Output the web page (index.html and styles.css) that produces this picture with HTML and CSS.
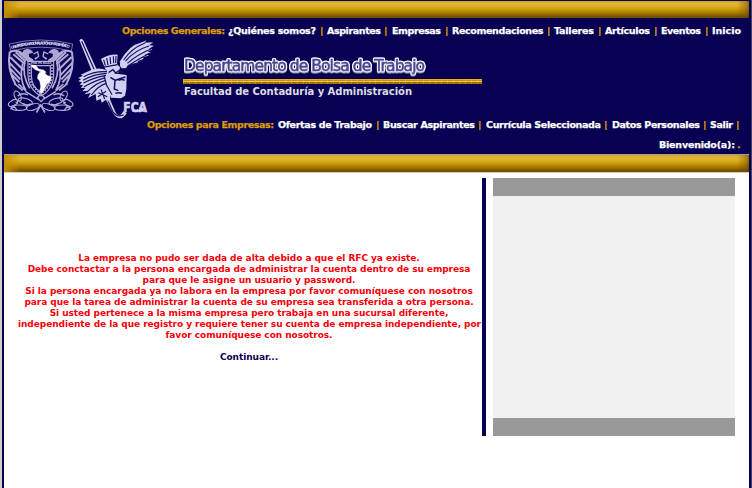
FILE: index.html
```
<!DOCTYPE html>
<html lang="es">
<head>
<meta charset="utf-8">
<title>Departamento de Bolsa de Trabajo</title>
<link rel="stylesheet" href="styles.css">
</head>
<body>
<div class="page">
  <div class="bar"></div>
  <header class="header">
    <nav class="nav nav-general"><svg width="619" height="14">
      <text class="gold" x="0" y="10" textLength="103">Opciones Generales:</text>
      <text x="106" y="10" textLength="88">¿Quiénes somos?</text><text class="gold" x="198" y="10">|</text>
      <text x="205" y="10" textLength="54">Aspirantes</text><text class="gold" x="262" y="10">|</text>
      <text x="270" y="10" textLength="49">Empresas</text><text class="gold" x="323" y="10">|</text>
      <text x="330" y="10" textLength="91.5">Recomendaciones</text><text class="gold" x="425" y="10">|</text>
      <text x="432" y="10" textLength="40">Talleres</text><text class="gold" x="476" y="10">|</text>
      <text x="483" y="10" textLength="45">Artículos</text><text class="gold" x="532" y="10">|</text>
      <text x="539" y="10" textLength="40">Eventos</text><text class="gold" x="583" y="10">|</text>
      <text x="590" y="10" textLength="29">Inicio</text>
    </svg></nav>
    <div class="brand">
      <svg class="logos" viewBox="12 114 456 240" width="152" height="80">
        <defs>
          <path id="arc" d="M34 147Q120 120 216 146"/>
        </defs>
        <g class="line">
          <path d="M28 132Q122 108 218 132L214 153Q122 130 32 153Z" stroke-width="2"/>
          <g id="eagle">
            <path class="solid" d="M72 152Q88 143 97 157L84 160 86 172 99 180 91 188 76 177 69 163Z"/>
            <path d="M70 162Q47 146 29 157Q20 205 47 254M40 163l35 29M31 172l40 39M28 188l37 39M30 205l31 33M34 222l24 25M47 157l29 27M57 157l18 16" stroke-width="6"/>
            <path d="M75 182Q65 225 89 265M68 190Q56 237 78 272M55 252l22 20M43 251l25 20" stroke-width="5"/>
            <path d="M100 162l13-6 3 13-10 9M104 176l11-5" stroke-width="4"/>
          </g>
          <use href="#eagle" transform="matrix(-1 0 0 1 245 0)"/>
          <path class="shell" d="M84 184H161V222Q160 268 123 288Q84 268 84 222Z"/>
          <path class="shell" d="M94 197H151V226Q151 263 123 276Q94 262 94 226Z"/>
          <path d="M89 190v34q0 35 34 57 33-23 33-57v-34" stroke-width="5" stroke-dasharray="5 4"/>
          <path class="land" d="M92 194l15 2 9 11 15 3 8 7-9 2-12-5-12-5-9-7Z"/>
          <path class="land" d="M119 217l13-1 8 9 13 6-2 13-10 9-8 14-7 13-8-1 4-20-3-16-7-8 2-11Z"/>
          <path d="M112 294l10-14 12 14-11 11ZM76 274l40 25M168 274l-40 25M84 285q-18-9-31 3M160 285q17-9 33 3" stroke-width="4"/>
          <g id="cactus">
            <ellipse cx="53" cy="288" rx="9" ry="16" transform="rotate(-28 53 288)"/>
            <ellipse cx="76" cy="304" rx="22" ry="9" transform="rotate(16 76 304)"/>
            <ellipse cx="39" cy="309" rx="15" ry="8" transform="rotate(-30 39 309)"/>
            <ellipse cx="57" cy="323" rx="23" ry="8"/>
            <ellipse cx="99" cy="321" rx="20" ry="9" transform="rotate(-18 99 321)"/>
            <path d="M31 327l12-7 8 11M69 311l11 5 12-4M109 337l13-22 12 22M47 306l7 5" stroke-width="4"/>
          </g>
          <use href="#cactus" transform="matrix(-1 0 0 1 244 0)"/>
        </g>
        <text class="motto"><textPath href="#arc" textLength="176">UNIVERSIDAD NACIONAL AUTÓNOMA DE MÉXICO</textPath></text>
        <text class="shield" x="92" y="193" textLength="62">POR MI RAZA</text>
        <g class="mascot">
          <path class="light" d="M238 121q6-8 12 0l60 131 35 81q8 20 20 8l6-8 9 7q-14 23-31 11-8-6-13-17L286 239Z"/>
          <path class="cut" d="M245 124L338 334Q350 354 371 344"/>
          <path class="light" d="M303 177q25-15 50-13l-2 28 9 10-3 15-24 7-17-17Z"/>
          <path class="cut" d="M311 179l5 18M320 174l4 21M330 171l2 21M340 169l1 21M348 168l-1 21M307 202l46-8"/>
          <path class="light" d="M359 185Q389 134 420 129l20-8-7 7 27-1-13 9 15 1-15 9 11 1-15 8 11 2-20 7 14 2-22 7 7 4-20 6 3 5-20 3-7 5-20 3-7-2Q373 207 363 198Z"/>
          <path class="cut" d="M371 180Q394 145 435 129M376 184Q405 150 447 138M382 190Q413 163 453 147M384 197Q416 177 450 159M384 202Q414 190 438 174"/>
          <circle class="light" cx="371" cy="194" r="11"/>
          <path class="light" d="M326 218l54 7-1 42-4 20-12 8-30-2-17-45Z"/>
          <path class="cut face" d="M326 217l13-8 8 10 11-8 11 9M331 232l15 9 30-10M345 241l-2 26 12 5M356 241q9-5 18 0M346 280q11-4 20 0"/>
          <path class="light" d="M326 214Q299 199 272 211L242 224 249 227 234 234 243 237 235 244 246 247 239 254 249 255 243 264 256 264 247 274 263 272 254 283 272 279 264 294 288 281 320 260Z"/>
          <path class="cut" d="M321 215Q282 213 251 230M320 220Q281 222 249 241M318 226Q281 233 250 249M316 233Q285 242 251 261M318 241Q288 248 260 277M319 250Q296 256 274 285"/>
          <path class="light" d="M301 266l-14 15 2 21 13-5 3 11 13-9 11 7 2-29-10-18Z"/>
          <path class="cut" d="M295 278l27 12M294 290l24-16M303 268l11 29M312 228l8 28 16 28"/>
          <text class="fca" transform="translate(370 335) scale(.79 1)">FCA</text>
          <path class="light" d="M417 320l20 15H398l-3-5h24Z"/>
        </g>
      </svg>
      <div class="titles">
        <svg class="title" width="248" height="24">
          <text x="1" y="16" textLength="241">Departamento de Bolsa de Trabajo</text>
        </svg>
        <div class="rule"></div>
        <svg class="faculty" width="240" height="16"><text x="1" y="11" textLength="228">Facultad de Contaduría y Administración</text></svg>
      </div>
    </div>
    <nav class="nav nav-company"><svg width="594" height="14">
      <text class="gold" x="0" y="10" textLength="127">Opciones para Empresas:</text>
      <text x="131" y="10" textLength="94">Ofertas de Trabajo</text><text class="gold" x="229" y="10">|</text>
      <text x="236" y="10" textLength="92">Buscar Aspirantes</text><text class="gold" x="331" y="10">|</text>
      <text x="339" y="10" textLength="115">Currícula Seleccionada</text><text class="gold" x="457" y="10">|</text>
      <text x="465" y="10" textLength="88">Datos Personales</text><text class="gold" x="556" y="10">|</text>
      <text x="563" y="10" textLength="23">Salir</text><text class="gold" x="589" y="10">|</text>
    </svg></nav>
    <div class="nav welcome"><svg width="82" height="14">
      <text x="0" y="10" textLength="76">Bienvenido(a):</text><text class="gold" x="78" y="10">.</text>
    </svg></div>
  </header>
  <div class="bar bar-lower"></div>
  <main class="content">
    <section class="message">
      <p>La empresa no pudo ser dada de alta debido a que el RFC ya existe.<br>
      Debe conctactar a la persona encargada de administrar la cuenta dentro de su empresa<br>
      para que le asigne un usuario y password.<br>
      Si la persona encargada ya no labora en la empresa por favor comuníquese con nosotros<br>
      para que la tarea de administrar la cuenta de su empresa sea transferida a otra persona.<br>
      Si usted pertenece a la misma empresa pero trabaja en una sucursal diferente,<br>
      independiente de la que registro y requiere tener su cuenta de empresa independiente, por<br>
      favor comuníquese con nosotros.</p>
      <a class="continue">Continuar...</a>
    </section>
    <div class="divider"></div>
    <aside class="panel"></aside>
  </main>
</div>
</body>
</html>
```
FILE: styles.css
```
* { box-sizing: border-box; }
body {
  margin: 0;
  background: #d0d0d0;
  font: bold 9px/11px Verdana, "DejaVu Sans", sans-serif;
  overflow: hidden;
}
svg { display: block; overflow: visible; }
.page {
  width: 749px;
  height: 488px;
  margin-left: 2px;
  border: solid #080052;
  border-width: 1px 2px 0;
  background: #fff;
  box-shadow: 1px 0 #494466;
}
.bar {
  height: 17px;
  background:
    radial-gradient(ellipse at 7px 4px, #f2dfa0b0 0, #e4bd4a60 9px, transparent 18px),
    linear-gradient(90deg, #c58f00 0, #c58f0000 16px, transparent 733px, #66450070 743px, #403000a0),
    linear-gradient(#c8a02b 0, #e1b532 2px, #deb12c 5px, #d19f08 8px, #a87900 12px, #805900 15px, #694900);
}
.bar-lower {
  height: 19px;
  border-top: 1px solid #aaa08e;
  border-bottom: 1px solid #d8cfb9;
}
.header {
  display: flex;
  flex-direction: column;
  align-items: flex-end;
  height: 136px;
  background: #080052;
}
.nav {
  fill: #fff;
  padding-right: 8px;
}
.nav text { font-size: 9.5px; stroke: #fff; stroke-width: .25px; }
.nav .gold { fill: #dc9b06; stroke: #dc9b06; }
.nav-general { height: 20px; padding-top: 6px; }
.nav-company { height: 20px; padding-top: 0; }
.welcome { padding-top: 0; }
.brand {
  display: flex;
  width: 100%;
  height: 80px;
}
.titles { padding: 17px 0 0 27px; }
.title text {
  font: normal 15.5px "DejaVu Sans", sans-serif;
  fill: #4a4590;
  stroke: #4a4590;
  stroke-width: .5px;
  filter:
    drop-shadow(1px 0 0 #f4f4fa) drop-shadow(-1px 0 0 #f4f4fa)
    drop-shadow(0 1px 0 #dcdce2) drop-shadow(0 -1px 0 #fff)
    drop-shadow(0 1px 0 #88869a);
}
.rule {
  width: 299px;
  height: 5px;
  background:
    repeating-linear-gradient(90deg, #eac45860 0 1px, transparent 1px 6px),
    linear-gradient(#e6af17 0 1px, #c98f00 1px 2px, #e8c45d 2px 3px, #a16f00 3px 5px);
}
.faculty text { font-size: 10px; fill: #dddde4; }
.line {
  fill: none;
  stroke: #b2add6;
  stroke-width: 3.5px;
}
.shell { fill: #080052; }
.solid { fill: #aaa5d0; }
.land { fill: #fff; stroke: #fff; stroke-width: 1px; }
.motto { font-size: 12px; fill: #d4d0ed; }
.shield { font-size: 9px; fill: #c9c5e6; }
.light { fill: #d2d0f0; }
.cut { fill: none; stroke: #160e60; stroke-width: 3.5px; }
.face { stroke-width: 4.5px; }
.fca { font: bold 41px "DejaVu Sans", sans-serif; fill: #d2d0f0; stroke: #d2d0f0; stroke-width: 2px; }
.content { display: flex; padding-top: 5px; }
.message {
  width: 462px;
  margin-left: 14px;
  padding-top: 75px;
  text-align: center;
  letter-spacing: -.06px;
  white-space: nowrap;
}
.message p { margin: 0 0 11px; color: #f90008; }
.continue { color: #080052; }
.divider {
  width: 4px;
  height: 258px;
  margin: 0 7px 0 2px;
  background: #080052;
}
.panel {
  width: 242px;
  height: 258px;
  border: solid #999;
  border-width: 18px 0;
  background: #f1f1f1;
}
```
